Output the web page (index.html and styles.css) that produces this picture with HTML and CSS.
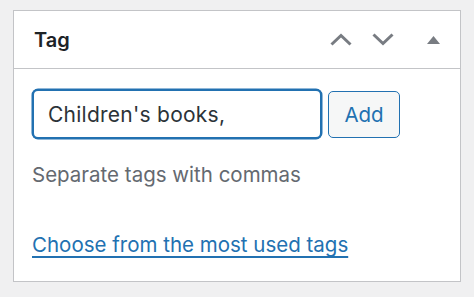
FILE: index.html
```html
<!DOCTYPE html>
<html lang="en">
  <head>
    <meta charset="utf-8">
    <title>Tag</title>
    <link rel="stylesheet" href="styles.css">
  </head>
  <body>
    <div class="postbox">
      <div class="postbox-header">
        <h2 class="hndle">Tag</h2>
        <div class="handle-actions">
          <button class="handle-btn up" type="button" aria-label="Move up">
            <svg width="22" height="13" viewBox="0 0 22 13"><polyline points="1.5,11.5 11,2.5 20.5,11.5" fill="none" stroke="#787c82" stroke-width="3"/></svg>
          </button>
          <button class="handle-btn down" type="button" aria-label="Move down">
            <svg width="22" height="13" viewBox="0 0 22 13"><polyline points="1.5,1.5 11,10.5 20.5,1.5" fill="none" stroke="#787c82" stroke-width="3"/></svg>
          </button>
          <button class="handle-btn toggle" type="button" aria-label="Toggle panel">
            <svg width="13" height="8" viewBox="0 0 13 8"><polygon points="0,8 6.5,0 13,8" fill="#787c82"/></svg>
          </button>
        </div>
      </div>
      <div class="inside">
        <div class="ajaxtag">
          <input class="newtag" type="text" value="Children's books,">
          <button class="button" type="button">Add</button>
        </div>
        <p class="howto">Separate tags with commas</p>
        <p class="tagcloud-link"><a href="#">Choose from the most used tags</a></p>
      </div>
    </div>
  </body>
</html>
```

FILE: styles.css
```css
html,body,div,p,h2{
  margin:0;
  padding:0;
}
body{
  padding:10px 13px;
  background-color:#f0f0f1;
  font-family:Inter,"Liberation Sans",sans-serif;
  color:#1d2327;
}
.postbox{
  width:448px;
  height:272px;
  box-sizing:border-box;
  background-color:#fff;
  border:1px solid #c3c4c7;
}
.postbox-header{
  display:flex;
  align-items:center;
  height:58px;
  box-sizing:border-box;
  padding:0 20px 0 20px;
  border-bottom:1px solid #c3c4c7;
}
.hndle{
  flex:1;
  font-size:20px;
  font-weight:600;
  line-height:1;
  color:#1d2327;
}
.handle-actions{
  display:flex;
  align-items:center;
}
.handle-btn{
  display:flex;
  padding:0;
  border:0;
  background:none;
  cursor:pointer;
}
.handle-btn.down{
  margin-left:20px;
}
.handle-btn.toggle{
  margin-left:33px;
  margin-top:1px;
}
.inside{
  padding:20px 18px 0;
}
.ajaxtag{
  display:flex;
  align-items:center;
}
.newtag{
  width:290px;
  height:50px;
  box-sizing:border-box;
  padding:0 14px;
  font-family:inherit;
  font-size:21px;
  letter-spacing:.25px;
  color:#2c3338;
  border:2px solid #2271b1;
  border-radius:6px;
  box-shadow:0 0 0 0.5px #2271b1;
  outline:none;
}
.button{
  margin-left:6px;
  width:72px;
  height:47px;
  font-family:inherit;
  font-size:20.5px;
  color:#2271b1;
  background-color:#f6f7f7;
  border:1px solid #2271b1;
  border-radius:5px;
  cursor:pointer;
}
.howto{
  margin-top:22px;
  font-size:20.5px;
  line-height:28px;
  color:#646970;
}
.tagcloud-link{
  margin-top:42px;
  font-size:20.5px;
  line-height:28px;
}
.tagcloud-link a{
  color:#2271b1;
  text-decoration:underline;
  text-underline-offset:4px;
}
```
